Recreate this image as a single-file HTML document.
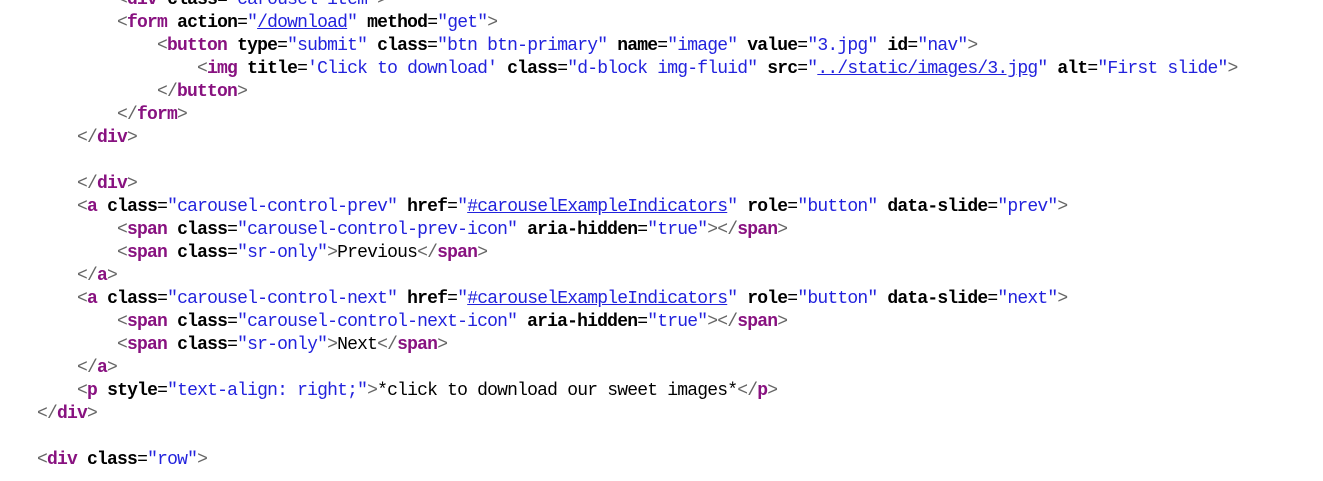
<html><head><style>
body{margin:0;background:#fff;width:1323px;height:481px;overflow:hidden;position:relative}
.c{position:absolute;top:-11px;left:37px;font-family:"Liberation Mono",monospace;font-size:18px;letter-spacing:-0.8px;line-height:23px;white-space:pre;color:#000}
.b{color:#666}.t{color:#881280;font-weight:bold}.a{font-weight:bold;color:#000}.v{color:#2222dd}.u{text-decoration:underline}
</style></head><body><div class="c"><span class="b">        &lt;</span><span class="t">div</span> <span class="a">class</span>=<span class="v">"carousel-item"</span><span class="b">&gt;</span>
        <span class="b">&lt;</span><span class="t">form</span> <span class="a">action</span>=<span class="v">"<span class="u">/download</span>"</span> <span class="a">method</span>=<span class="v">"get"</span><span class="b">&gt;</span>
            <span class="b">&lt;</span><span class="t">button</span> <span class="a">type</span>=<span class="v">"submit"</span> <span class="a">class</span>=<span class="v">"btn btn-primary"</span> <span class="a">name</span>=<span class="v">"image"</span> <span class="a">value</span>=<span class="v">"3.jpg"</span> <span class="a">id</span>=<span class="v">"nav"</span><span class="b">&gt;</span>
                <span class="b">&lt;</span><span class="t">img</span> <span class="a">title</span>=<span class="v">'Click to download'</span> <span class="a">class</span>=<span class="v">"d-block img-fluid"</span> <span class="a">src</span>=<span class="v">"<span class="u">../static/images/3.jpg</span>"</span> <span class="a">alt</span>=<span class="v">"First slide"</span><span class="b">&gt;</span>
            <span class="b">&lt;/</span><span class="t">button</span><span class="b">&gt;</span>
        <span class="b">&lt;/</span><span class="t">form</span><span class="b">&gt;</span>
    <span class="b">&lt;/</span><span class="t">div</span><span class="b">&gt;</span>

<span class="b">    &lt;/</span><span class="t">div</span><span class="b">&gt;</span>
    <span class="b">&lt;</span><span class="t">a</span> <span class="a">class</span>=<span class="v">"carousel-control-prev"</span> <span class="a">href</span>=<span class="v">"<span class="u">#carouselExampleIndicators</span>"</span> <span class="a">role</span>=<span class="v">"button"</span> <span class="a">data-slide</span>=<span class="v">"prev"</span><span class="b">&gt;</span>
        <span class="b">&lt;</span><span class="t">span</span> <span class="a">class</span>=<span class="v">"carousel-control-prev-icon"</span> <span class="a">aria-hidden</span>=<span class="v">"true"</span><span class="b">&gt;&lt;/</span><span class="t">span</span><span class="b">&gt;</span>
        <span class="b">&lt;</span><span class="t">span</span> <span class="a">class</span>=<span class="v">"sr-only"</span><span class="b">&gt;</span>Previous<span class="b">&lt;/</span><span class="t">span</span><span class="b">&gt;</span>
    <span class="b">&lt;/</span><span class="t">a</span><span class="b">&gt;</span>
    <span class="b">&lt;</span><span class="t">a</span> <span class="a">class</span>=<span class="v">"carousel-control-next"</span> <span class="a">href</span>=<span class="v">"<span class="u">#carouselExampleIndicators</span>"</span> <span class="a">role</span>=<span class="v">"button"</span> <span class="a">data-slide</span>=<span class="v">"next"</span><span class="b">&gt;</span>
        <span class="b">&lt;</span><span class="t">span</span> <span class="a">class</span>=<span class="v">"carousel-control-next-icon"</span> <span class="a">aria-hidden</span>=<span class="v">"true"</span><span class="b">&gt;&lt;/</span><span class="t">span</span><span class="b">&gt;</span>
        <span class="b">&lt;</span><span class="t">span</span> <span class="a">class</span>=<span class="v">"sr-only"</span><span class="b">&gt;</span>Next<span class="b">&lt;/</span><span class="t">span</span><span class="b">&gt;</span>
    <span class="b">&lt;/</span><span class="t">a</span><span class="b">&gt;</span>
    <span class="b">&lt;</span><span class="t">p</span> <span class="a">style</span>=<span class="v">"text-align: right;"</span><span class="b">&gt;</span>*click to download our sweet images*<span class="b">&lt;/</span><span class="t">p</span><span class="b">&gt;</span>
<span class="b">&lt;/</span><span class="t">div</span><span class="b">&gt;</span>

<span class="b">&lt;</span><span class="t">div</span> <span class="a">class</span>=<span class="v">"row"</span><span class="b">&gt;</span></div></body></html>
